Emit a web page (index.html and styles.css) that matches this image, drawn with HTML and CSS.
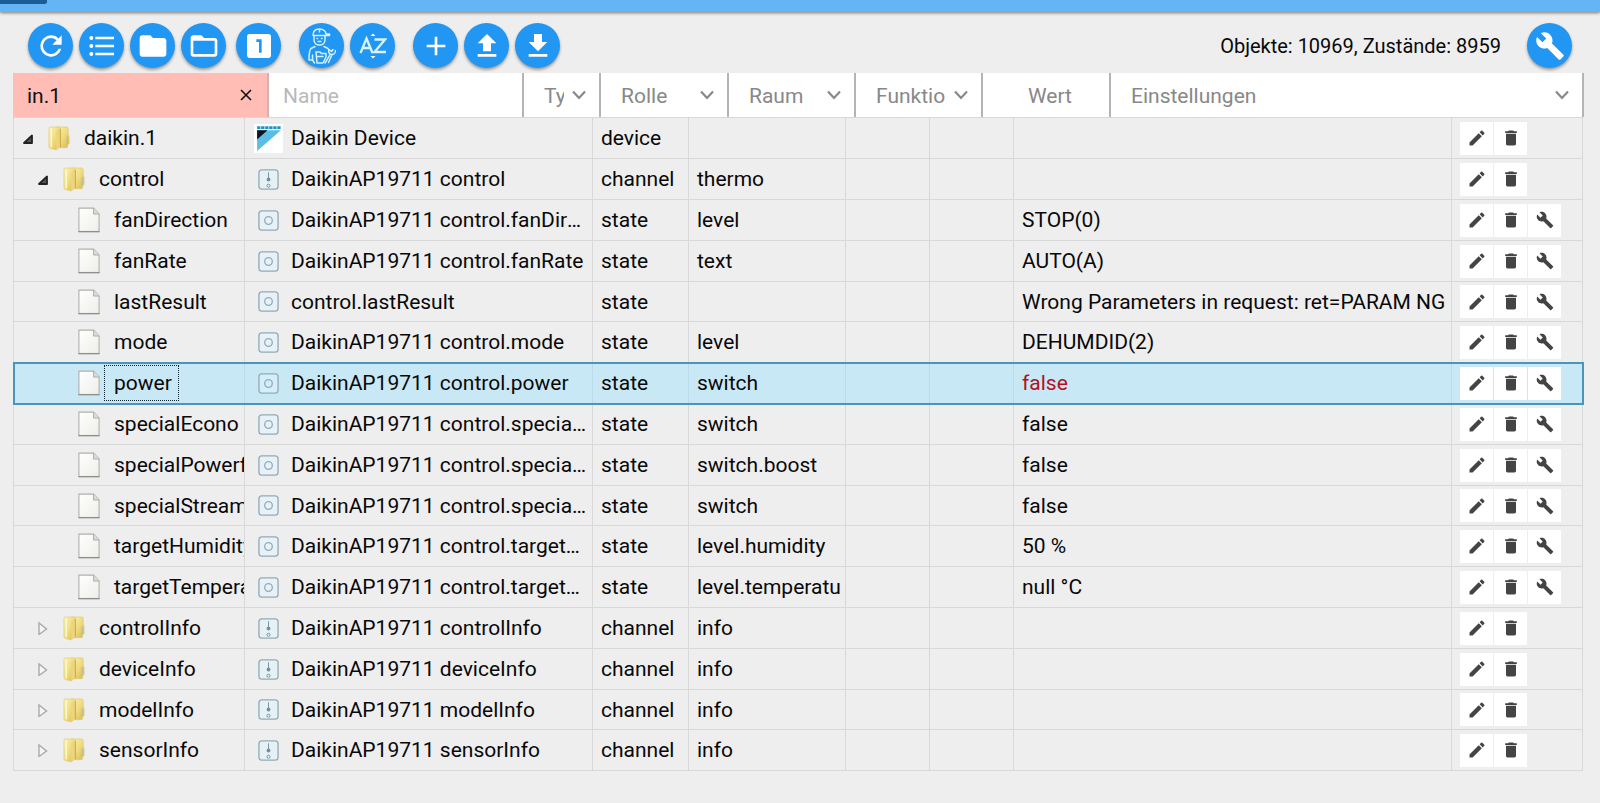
FILE: index.html
```html
<!DOCTYPE html>
<html lang="de">
<head>
<meta charset="utf-8">
<title>Objekte</title>
<link rel="stylesheet" href="styles.css">
</head>
<body>
<svg class="sprite" aria-hidden="true">
  <defs>
    <linearGradient id="gold" x1="0" x2="1" y1="0" y2="1"><stop offset="0" stop-color="#fbf3b0"/><stop offset=".5" stop-color="#f0dc80"/><stop offset="1" stop-color="#d9b94a"/></linearGradient>
    <linearGradient id="paper" x1="0" x2="1" y1="0" y2="1"><stop offset="0" stop-color="#ffffff"/><stop offset="1" stop-color="#eeefe9"/></linearGradient>
    <symbol id="i-edit" viewBox="0 0 24 24"><path d="M3 17.25V21h3.75L17.81 9.94l-3.75-3.75L3 17.25zM20.71 7.04a1 1 0 0 0 0-1.41l-2.34-2.34a1 1 0 0 0-1.41 0l-1.83 1.83 3.75 3.75 1.83-1.83z"/></symbol>
    <symbol id="i-delete" viewBox="0 0 24 24"><path d="M6 19c0 1.1.9 2 2 2h8c1.1 0 2-.9 2-2V7H6v12zM19 4h-3.5l-1-1h-5l-1 1H5v2h14V4z"/></symbol>
    <symbol id="i-build" viewBox="0 0 24 24"><path d="M22.7 19l-9.1-9.1c.9-2.3.4-5-1.5-6.9-2-2-5-2.4-7.4-1.3L9 6 6 9 1.6 4.7C.4 7.1.9 10.1 2.9 12.1c1.9 1.9 4.6 2.4 6.9 1.5l9.1 9.1c.4.4 1 .4 1.4 0l2.3-2.3c.5-.4.5-1.1.1-1.4z"/></symbol>
    <symbol id="i-chevron" viewBox="0 0 14 10"><path d="M1 1.5l6 6.5 6-6.5" fill="none" stroke="#888" stroke-width="2.2"/></symbol>
    <symbol id="i-folder" viewBox="0 0 24 28"><path d="M9 2h11.500q1.500 0 1.500 1.500V10l1 2v8l-1.500 1v2q0 1.500-1.500 1.500H9z" fill="url(#gold)" stroke="#dcc76e" stroke-width=".7"/><path d="M1 3.500Q1 2 2.500 2H12l1.500 1.500V23L9 27l-6.500-1.500Q1 25 1 23.500z" fill="url(#gold)" stroke="#e0cc78" stroke-width=".7"/><path d="M9 7l4-4v20.500L9 27z" fill="#ecd57c"/><path d="M13.500 4v20" stroke="#c9a63c" stroke-width="1"/><path d="M3.500 4v20" stroke="#fffbd4" stroke-width="1.500"/><path d="M21 12v9" stroke="#b9bfa0" stroke-width="1.500"/></symbol>
    <symbol id="i-file" viewBox="0 0 24 28"><path d="M1 1h16l6 6.500V26.500H1z" fill="url(#paper)" stroke="#b0b0ac" stroke-width="1.200"/><path d="M17 1v6.500h6" fill="#ddddd8" stroke="#a8a8a4"/><path d="M.5 26.700h23" stroke="#8f8f8c" stroke-width="1.500"/></symbol>
    <symbol id="i-open" viewBox="0 0 12 14"><path d="M2 12L10 4.500V12z" fill="#555" stroke="#222" stroke-width="1.800" stroke-linejoin="round"/></symbol>
    <symbol id="i-closed" viewBox="0 0 12 14"><path d="M2 2v11.500L9.500 8z" fill="#f6f6f6" stroke="#aaa" stroke-width="1.400"/></symbol>
    <symbol id="i-channel" viewBox="0 0 22 22"><rect x="1" y="1" width="20" height="20" rx="3" fill="#e6f1f6" stroke="#93acb8" stroke-width="1.400"/><path d="M11 3.500v9" stroke="#78909c" stroke-width="1"/><circle cx="11" cy="11" r="2" fill="#78909c"/><circle cx="11" cy="17.500" r="1.600" fill="none" stroke="#78909c"/></symbol>
    <symbol id="i-state" viewBox="0 0 22 22"><rect x="1" y="1" width="20" height="20" rx="3" fill="#e0f4ff" fill-opacity=".5" stroke="#93acb8" stroke-width="1.400"/><circle cx="11" cy="11" r="4" fill="none" stroke="#93acb8" stroke-width="1.400"/></symbol>
  </defs>
</svg>

<header class="appbar"><span class="appbar-tab"></span></header>

<main class="page">
  <div class="toolbar">
    <div class="tool-group">
      <button class="fab" aria-label="Aktualisieren"><svg viewBox="0 0 24 24"><path d="M17.650 6.350A7.960 7.960 0 0 0 12 4a8 8 0 1 0 7.730 10h-2.080A6 6 0 1 1 12 6c1.660 0 3.140.69 4.220 1.780L13 11h7V4l-2.350 2.350z"/></svg></button>
      <button class="fab" aria-label="Listenansicht"><svg viewBox="0 0 24 24"><path d="M4 10.500a1.500 1.500 0 1 0 0 3 1.500 1.500 0 0 0 0-3zm0-6a1.500 1.500 0 1 0 0 3 1.500 1.500 0 0 0 0-3zm0 12a1.500 1.500 0 1 0 0 3 1.500 1.500 0 0 0 0-3zM7 19h14v-2H7v2zm0-6h14v-2H7v2zm0-8v2h14V5H7z"/></svg></button>
      <button class="fab" aria-label="Alle zuklappen"><svg viewBox="0 0 24 24"><path d="M10 4H4c-1.100 0-2 .9-2 2v12c0 1.100.9 2 2 2h16c1.100 0 2-.9 2-2V8c0-1.100-.9-2-2-2h-8l-2-2z"/></svg></button>
      <button class="fab" aria-label="Alle aufklappen"><svg viewBox="0 0 24 24"><path d="M20 6h-8l-2-2H4c-1.100 0-2 .9-2 2v12c0 1.100.9 2 2 2h16c1.100 0 2-.9 2-2V8c0-1.100-.9-2-2-2zm0 12H4V8h16v10z"/></svg></button>
    </div>
    <div class="tool-group near">
      <button class="fab" aria-label="Eine Ebene"><svg viewBox="0 0 24 24"><path d="M19 3H5a2 2 0 0 0-2 2v14c0 1.100.9 2 2 2h14a2 2 0 0 0 2-2V5a2 2 0 0 0-2-2zm-5 14h-2V9h-2V7h4v10z"/></svg></button>
    </div>
    <div class="tool-group">
      <button class="fab" aria-label="Expertenmodus"><svg class="expert" viewBox="0 0 28 36" fill="none" stroke="#d4f1ff" stroke-width="1.500" stroke-linejoin="round" stroke-linecap="round"><path d="M5 7.500C5 3 8 1 11.500 1S18 3 18 6h3.500v1.500H5M11.500 1v3M6 8v4c0 3 2.500 5 5.500 5s5.500-2 5.500-5V8"/><path d="M9 10.500h.5M13.500 10.500h.5M10 13.500h3M7 18.500l-4 2C1.500 22 1 26 1 32h4M4.500 27v5l2 3M8 24h4l1.500 1.500H18V29l-3 6H9zM9 28.500h6M16 18.500l4 2 1 2M17 35l2-3 3-5.500M21 21.500c-1 3 .5 5 3 5 2 0 3.500-2 3.500-4M21 21.500l2.500 2 1.500-2M24 26.500l-3.500 8"/></svg></button>
      <button class="fab" aria-label="Sortieren"><svg class="sort" viewBox="0 0 28 28"><path d="M11.500 4L14 1.500 16.500 4zM11.500 24l2.500 2.500 2.500-2.500z"/><path d="M1.500 21L7.500 6.500l6 14.500M4 16h7M15.500 7.500H26L15.500 20H27" fill="none" stroke="#d9f4ff" stroke-width="2.300"/></svg></button>
    </div>
    <div class="tool-group">
      <button class="fab" aria-label="Hinzufügen"><svg viewBox="0 0 24 24"><path d="M19 13h-6v6h-2v-6H5v-2h6V5h2v6h6v2z"/></svg></button>
      <button class="fab" aria-label="Hochladen"><svg viewBox="0 0 24 24"><path d="M9 16h6v-6h4l-7-7-7 7h4zm-4 2h14v2H5z"/></svg></button>
      <button class="fab" aria-label="Herunterladen"><svg viewBox="0 0 24 24"><path d="M19 9h-4V3H9v6H5l7 7 7-7zM5 18v2h14v-2H5z"/></svg></button>
    </div>
    <p class="stats">Objekte: 10969, Zustände: 8959</p>
    <button class="fab" aria-label="Einstellungen"><svg class="wrench" viewBox="0 0 24 24"><use href="#i-build"/></svg></button>
  </div>

  <form class="filters">
    <div class="filter active"><input aria-label="ID" value="in.1"><button type="button" class="clear" aria-label="Filter löschen"><svg viewBox="0 0 14 14"><path d="M2 2l10 10M12 2L2 12" stroke="#111" stroke-width="1.600"/></svg></button></div>
    <div class="filter"><input aria-label="Name" placeholder="Name"></div>
    <div class="filter"><select aria-label="Typ"><option>Typ</option></select><svg class="chevron"><use href="#i-chevron"/></svg></div>
    <div class="filter"><select aria-label="Rolle"><option>Rolle</option></select><svg class="chevron"><use href="#i-chevron"/></svg></div>
    <div class="filter"><select aria-label="Raum"><option>Raum</option></select><svg class="chevron"><use href="#i-chevron"/></svg></div>
    <div class="filter"><select aria-label="Funktion"><option>Funktion</option></select><svg class="chevron"><use href="#i-chevron"/></svg></div>
    <div class="filter label">Wert</div>
    <div class="filter"><select aria-label="Einstellungen"><option>Einstellungen</option></select><svg class="chevron"><use href="#i-chevron"/></svg></div>
  </form>

  <table class="tree">
    <colgroup><col class="c-id"><col class="c-name"><col class="c-type"><col class="c-role"><col class="c-room"><col class="c-func"><col><col class="c-actions"></colgroup>
    <tbody>
      <tr><td><div class="node"><svg class="toggle"><use href="#i-open"/></svg><svg class="kind"><use href="#i-folder"/></svg><span class="title">daikin.1</span></div></td><td><div class="name"><svg class="logo" viewBox="0 0 28 28"><path fill="#fff" d="M0 0h28v28H0z"/><path fill="#5bbce6" d="M3 6h23L3 26z"/><path fill="#10131c" d="M3 6h10L3 15z"/><path d="M3 3.500h23" stroke="#1795c4" stroke-width="2.600" stroke-dasharray="3.200 .7"/></svg><span>Daikin Device</span></div></td><td>device</td><td></td><td></td><td></td><td></td><td><div class="actions"><button aria-label="Bearbeiten"><svg><use href="#i-edit"/></svg></button><button aria-label="Löschen"><svg><use href="#i-delete"/></svg></button></div></td></tr>
      <tr><td><div class="node l1"><svg class="toggle"><use href="#i-open"/></svg><svg class="kind"><use href="#i-folder"/></svg><span class="title">control</span></div></td><td><div class="name"><svg><use href="#i-channel"/></svg><span>DaikinAP19711 control</span></div></td><td>channel</td><td>thermo</td><td></td><td></td><td></td><td><div class="actions"><button aria-label="Bearbeiten"><svg><use href="#i-edit"/></svg></button><button aria-label="Löschen"><svg><use href="#i-delete"/></svg></button></div></td></tr>
      <tr><td><div class="node l2"><svg class="kind"><use href="#i-file"/></svg><span class="title">fanDirection</span></div></td><td><div class="name"><svg><use href="#i-state"/></svg><span>DaikinAP19711 control.fanDirection</span></div></td><td>state</td><td>level</td><td></td><td></td><td>STOP(0)</td><td><div class="actions"><button aria-label="Bearbeiten"><svg><use href="#i-edit"/></svg></button><button aria-label="Löschen"><svg><use href="#i-delete"/></svg></button><button class="config" aria-label="Konfigurieren"><svg><use href="#i-build"/></svg></button></div></td></tr>
      <tr><td><div class="node l2"><svg class="kind"><use href="#i-file"/></svg><span class="title">fanRate</span></div></td><td><div class="name"><svg><use href="#i-state"/></svg><span>DaikinAP19711 control.fanRate</span></div></td><td>state</td><td>text</td><td></td><td></td><td>AUTO(A)</td><td><div class="actions"><button aria-label="Bearbeiten"><svg><use href="#i-edit"/></svg></button><button aria-label="Löschen"><svg><use href="#i-delete"/></svg></button><button class="config" aria-label="Konfigurieren"><svg><use href="#i-build"/></svg></button></div></td></tr>
      <tr><td><div class="node l2"><svg class="kind"><use href="#i-file"/></svg><span class="title">lastResult</span></div></td><td><div class="name"><svg><use href="#i-state"/></svg><span>control.lastResult</span></div></td><td>state</td><td></td><td></td><td></td><td>Wrong Parameters in request: ret=PARAM NG</td><td><div class="actions"><button aria-label="Bearbeiten"><svg><use href="#i-edit"/></svg></button><button aria-label="Löschen"><svg><use href="#i-delete"/></svg></button><button class="config" aria-label="Konfigurieren"><svg><use href="#i-build"/></svg></button></div></td></tr>
      <tr><td><div class="node l2"><svg class="kind"><use href="#i-file"/></svg><span class="title">mode</span></div></td><td><div class="name"><svg><use href="#i-state"/></svg><span>DaikinAP19711 control.mode</span></div></td><td>state</td><td>level</td><td></td><td></td><td>DEHUMDID(2)</td><td><div class="actions"><button aria-label="Bearbeiten"><svg><use href="#i-edit"/></svg></button><button aria-label="Löschen"><svg><use href="#i-delete"/></svg></button><button class="config" aria-label="Konfigurieren"><svg><use href="#i-build"/></svg></button></div></td></tr>
      <tr class="selected"><td><div class="node l2"><svg class="kind"><use href="#i-file"/></svg><span class="title">power</span></div></td><td><div class="name"><svg><use href="#i-state"/></svg><span>DaikinAP19711 control.power</span></div></td><td>state</td><td>switch</td><td></td><td></td><td class="unacked">false</td><td><div class="actions"><button aria-label="Bearbeiten"><svg><use href="#i-edit"/></svg></button><button aria-label="Löschen"><svg><use href="#i-delete"/></svg></button><button class="config" aria-label="Konfigurieren"><svg><use href="#i-build"/></svg></button></div></td></tr>
      <tr><td><div class="node l2"><svg class="kind"><use href="#i-file"/></svg><span class="title">specialEcono</span></div></td><td><div class="name"><svg><use href="#i-state"/></svg><span>DaikinAP19711 control.specialEcono</span></div></td><td>state</td><td>switch</td><td></td><td></td><td>false</td><td><div class="actions"><button aria-label="Bearbeiten"><svg><use href="#i-edit"/></svg></button><button aria-label="Löschen"><svg><use href="#i-delete"/></svg></button><button class="config" aria-label="Konfigurieren"><svg><use href="#i-build"/></svg></button></div></td></tr>
      <tr><td><div class="node l2"><svg class="kind"><use href="#i-file"/></svg><span class="title">specialPowerful</span></div></td><td><div class="name"><svg><use href="#i-state"/></svg><span>DaikinAP19711 control.specialPowerful</span></div></td><td>state</td><td>switch.boost</td><td></td><td></td><td>false</td><td><div class="actions"><button aria-label="Bearbeiten"><svg><use href="#i-edit"/></svg></button><button aria-label="Löschen"><svg><use href="#i-delete"/></svg></button><button class="config" aria-label="Konfigurieren"><svg><use href="#i-build"/></svg></button></div></td></tr>
      <tr><td><div class="node l2"><svg class="kind"><use href="#i-file"/></svg><span class="title">specialStreamer</span></div></td><td><div class="name"><svg><use href="#i-state"/></svg><span>DaikinAP19711 control.specialStreamer</span></div></td><td>state</td><td>switch</td><td></td><td></td><td>false</td><td><div class="actions"><button aria-label="Bearbeiten"><svg><use href="#i-edit"/></svg></button><button aria-label="Löschen"><svg><use href="#i-delete"/></svg></button><button class="config" aria-label="Konfigurieren"><svg><use href="#i-build"/></svg></button></div></td></tr>
      <tr><td><div class="node l2"><svg class="kind"><use href="#i-file"/></svg><span class="title">targetHumidity</span></div></td><td><div class="name"><svg><use href="#i-state"/></svg><span>DaikinAP19711 control.targetHumidity</span></div></td><td>state</td><td>level.humidity</td><td></td><td></td><td>50 %</td><td><div class="actions"><button aria-label="Bearbeiten"><svg><use href="#i-edit"/></svg></button><button aria-label="Löschen"><svg><use href="#i-delete"/></svg></button><button class="config" aria-label="Konfigurieren"><svg><use href="#i-build"/></svg></button></div></td></tr>
      <tr><td><div class="node l2"><svg class="kind"><use href="#i-file"/></svg><span class="title">targetTemperature</span></div></td><td><div class="name"><svg><use href="#i-state"/></svg><span>DaikinAP19711 control.targetTemperature</span></div></td><td>state</td><td><div class="role">level.temperature</div></td><td></td><td></td><td>null °C</td><td><div class="actions"><button aria-label="Bearbeiten"><svg><use href="#i-edit"/></svg></button><button aria-label="Löschen"><svg><use href="#i-delete"/></svg></button><button class="config" aria-label="Konfigurieren"><svg><use href="#i-build"/></svg></button></div></td></tr>
      <tr><td><div class="node l1"><svg class="toggle"><use href="#i-closed"/></svg><svg class="kind"><use href="#i-folder"/></svg><span class="title">controlInfo</span></div></td><td><div class="name"><svg><use href="#i-channel"/></svg><span>DaikinAP19711 controlInfo</span></div></td><td>channel</td><td>info</td><td></td><td></td><td></td><td><div class="actions"><button aria-label="Bearbeiten"><svg><use href="#i-edit"/></svg></button><button aria-label="Löschen"><svg><use href="#i-delete"/></svg></button></div></td></tr>
      <tr><td><div class="node l1"><svg class="toggle"><use href="#i-closed"/></svg><svg class="kind"><use href="#i-folder"/></svg><span class="title">deviceInfo</span></div></td><td><div class="name"><svg><use href="#i-channel"/></svg><span>DaikinAP19711 deviceInfo</span></div></td><td>channel</td><td>info</td><td></td><td></td><td></td><td><div class="actions"><button aria-label="Bearbeiten"><svg><use href="#i-edit"/></svg></button><button aria-label="Löschen"><svg><use href="#i-delete"/></svg></button></div></td></tr>
      <tr><td><div class="node l1"><svg class="toggle"><use href="#i-closed"/></svg><svg class="kind"><use href="#i-folder"/></svg><span class="title">modelInfo</span></div></td><td><div class="name"><svg><use href="#i-channel"/></svg><span>DaikinAP19711 modelInfo</span></div></td><td>channel</td><td>info</td><td></td><td></td><td></td><td><div class="actions"><button aria-label="Bearbeiten"><svg><use href="#i-edit"/></svg></button><button aria-label="Löschen"><svg><use href="#i-delete"/></svg></button></div></td></tr>
      <tr><td><div class="node l1"><svg class="toggle"><use href="#i-closed"/></svg><svg class="kind"><use href="#i-folder"/></svg><span class="title">sensorInfo</span></div></td><td><div class="name"><svg><use href="#i-channel"/></svg><span>DaikinAP19711 sensorInfo</span></div></td><td>channel</td><td>info</td><td></td><td></td><td></td><td><div class="actions"><button aria-label="Bearbeiten"><svg><use href="#i-edit"/></svg></button><button aria-label="Löschen"><svg><use href="#i-delete"/></svg></button></div></td></tr>
    </tbody>
  </table>
</main>
</body>
</html>
```

FILE: styles.css
```css
* { box-sizing: border-box; }

body {
  margin: 0;
  background: #eee;
  color: #080808;
  font: 21px/26px Roboto, sans-serif;
}

button, input, select { font: inherit; border: 0; border-radius: 0; margin: 0; padding: 0; }
button { cursor: pointer; }
.sprite { position: absolute; width: 0; height: 0; }

.appbar {
  height: 12px;
  background: #64b5f6;
  box-shadow: 0 1px 3px rgba(0, 0, 0, .5);
}
.appbar-tab { display: block; width: 47px; height: 4px; background: #1d5d96; border-radius: 0 0 2px 0; }

.page { padding: 11px 16px 30px 13px; }

/* Toolbar */
.toolbar { display: flex; align-items: center; gap: 18px; padding: 0 12px 5px 15px; }
.tool-group { display: flex; gap: 6px; }
.tool-group.near { margin-left: -8px; }
.fab {
  display: flex;
  align-items: center;
  justify-content: center;
  flex: none;
  width: 45px;
  height: 45px;
  border-radius: 50%;
  background: #2196f3;
  box-shadow: 0 2px 3px rgba(0, 0, 0, .35);
}
.fab svg { width: 32px; height: 32px; fill: #fff; }
.fab .expert { width: 28px; height: 36px; fill: none; }
.fab .sort { width: 28px; height: 28px; }
.fab .wrench { width: 30px; height: 30px; }
.stats { flex: 1; margin: 0 8px 0 0; font-size: 20px; text-align: right; }

/* Filter bar */
.filters {
  display: grid;
  grid-template-columns: 256px 255px 77px 128px 127px 127px 128px 1fr;
  height: 44px;
  background: #fff;
  color: #888;
}
.filter { position: relative; display: flex; align-items: center; min-width: 0; border-right: 2px solid #b4b4b4; }
.filter input { flex: 1; min-width: 0; height: 100%; padding: 2px 14px 0; background: none; color: #111; }
.filter input::placeholder { color: #b9b9b9; }
.filter select { width: 100%; height: 100%; padding: 2px 35px 0 20px; appearance: none; background: none; color: #888; }
.filter.active { background: #ffbdb5; border-right-color: #d3b2b0; }
.filter.label { justify-content: center; padding: 2px 0 0 8px; }
.clear { width: 14px; height: 14px; margin-right: 14px; background: none; }
.clear svg { display: block; width: 14px; height: 14px; }
.chevron { position: absolute; right: 13px; top: 17px; width: 14px; height: 10px; pointer-events: none; }

/* Object tree */
.tree {
  width: calc(100% - 1px);
  table-layout: fixed;
  border-spacing: 0;
  border-left: 1px solid #d8d8d8;
  border-top: 1px solid #d8d8d8;
}
.c-id { width: 231px; }
.c-name { width: 348px; }
.c-type { width: 96px; }
.c-role { width: 157px; }
.c-room, .c-func { width: 84px; }
.c-actions { width: 131px; }
.tree tr { height: 41px; }
.tree tr:nth-child(5n) { height: 40px; }
.tree td {
  padding: 0 0 0 8px;
  border-right: 1px solid #d8d8d8;
  border-bottom: 1px solid #d8d8d8;
  overflow: hidden;
  white-space: nowrap;
}
.tree .selected { background: #c9e8f6; outline: 2px solid #4a96b8; outline-offset: -1px; }
.tree .selected td { border-right-color: #bcdcea; }
.selected .title { border-color: #123; }
.tree .unacked { color: #b4101c; }
.role { margin-right: 4px; overflow: hidden; }

.node { display: flex; align-items: center; }
.l1 { padding-left: 15px; }
.l2 { padding-left: 56px; }
.toggle { flex: none; width: 12px; height: 14px; margin-right: 14px; }
.kind { flex: none; width: 22px; height: 26px; margin-right: 4px; }
.title { padding: 4px 6px 4px 9px; border: 1px dotted transparent; }

.name { display: flex; align-items: center; padding-right: 2px; }
.name svg { flex: none; width: 21px; height: 21px; margin: 0 12px 0 5px; }
.name .logo { width: 29px; height: 29px; margin: 0 8px 0 1px; }
.name span { overflow: hidden; text-overflow: ellipsis; }

.actions { display: flex; gap: 1px; }
.actions button { display: flex; align-items: center; justify-content: center; width: 33px; height: 33px; background: #fff; }
.actions svg { width: 20px; height: 20px; fill: #444; }
.actions .config svg { width: 18px; height: 18px; }
```
